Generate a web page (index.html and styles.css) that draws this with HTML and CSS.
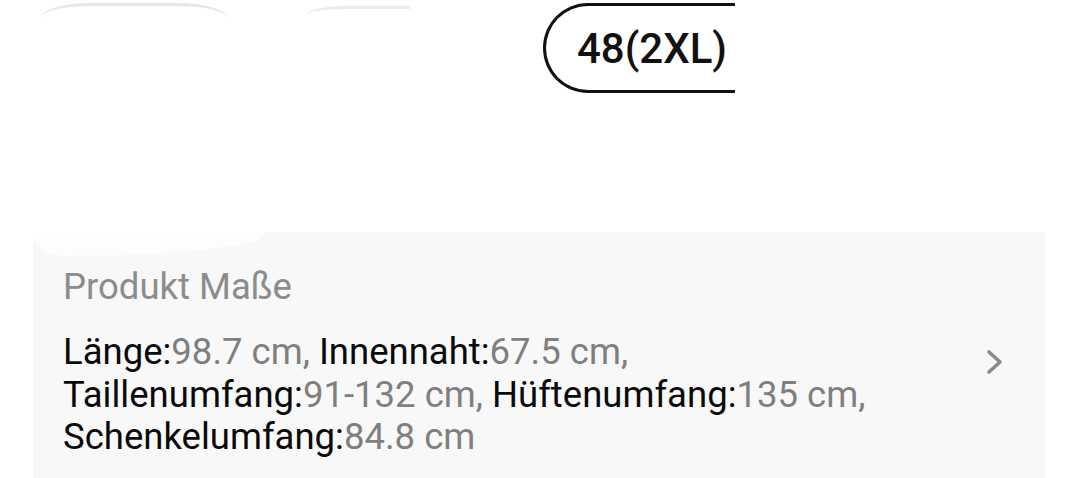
FILE: index.html
```html
<!DOCTYPE html>
<html lang="de">
<head>
<meta charset="utf-8">
<title>Produkt Maße</title>
<link rel="stylesheet" href="styles.css">
</head>
<body>
<div class="sizes">
  <div class="pill faint p1"></div>
  <div class="pill faint p2"></div>
  <div class="pill selected">48(2XL)</div>
</div>
<section class="panel">
  <div class="mask"></div>
  <div class="content">
    <h2 class="title">Produkt Maße</h2>
    <p class="dims"><span class="k">Länge:</span><span class="v">98.7 cm, </span><span class="k">Innennaht:</span><span class="v">67.5 cm,</span><br><span class="k">Taillenumfang:</span><span class="v">91-132 cm, </span><span class="k">Hüftenumfang:</span><span class="v">135 cm,</span><br><span class="k">Schenkelumfang:</span><span class="v">84.8 cm</span></p>
  </div>
  <svg class="chev" width="18" height="26" viewBox="0 0 18 26"><path d="M3 3 L14 13 L3 23" fill="none" stroke="#8a8a8a" stroke-width="3.6" stroke-linecap="round" stroke-linejoin="round"/></svg>
</section>
</body>
</html>
```
FILE: styles.css
```css
html, body {
  margin: 0;
  padding: 0;
  background: #ffffff;
  font-family: Roboto, "Liberation Sans", sans-serif;
  width: 1080px;
  height: 478px;
  overflow: hidden;
}
.sizes {
  display: flex;
  align-items: flex-start;
  padding: 3px 0 0 40px;
  height: 232px;
  box-sizing: border-box;
}
.pill {
  box-sizing: border-box;
  height: 90px;
}
.faint {
  border-top: 3px solid #e6e6e6;
  border-radius: 50px 50px 0 0 / 16px 16px 0 0;
}
.p1 { width: 188px; }
.p2 {
  width: 105px;
  margin-left: 77px;
  margin-top: 3px;
  border-top-color: #ebebeb;
  border-radius: 40px 0 0 0 / 10px 0 0 0;
}
.selected {
  margin-left: 133px;
  width: 192px;
  border: 3px solid #111;
  border-right: none;
  border-radius: 46px 0 0 46px;
  display: flex;
  align-items: center;
  justify-content: flex-start;
  padding: 0 0 0 31px;
  font-size: 42px;
  font-weight: 500;
  color: #111;
  white-space: nowrap;
}
.panel {
  position: relative;
  margin-left: 33px;
  width: 1013px;
  height: 260px;
  background: #f8f8f8;
  display: flex;
  align-items: flex-start;
}
.mask {
  position: absolute;
  left: 0;
  top: 0;
  width: 232px;
  height: 24px;
  background: #fdfdfd;
  border-radius: 0 0 220px 34px / 0 0 24px 24px;
}
.content {
  padding: 35px 0 0 30px;
  flex: 1;
}
.title {
  margin: 0;
  font-size: 36.5px;
  font-weight: 400;
  color: #8c8c8c;
  line-height: 40px;
}
.dims {
  margin: 24px 0 0 0;
  font-size: 36.5px;
  line-height: 42.5px;
  color: #000;
}
.k { color: #0a0a0a; }
.v { color: #7f7f7f; }
.chev {
  margin: 117px 42px 0 0;
}
```
